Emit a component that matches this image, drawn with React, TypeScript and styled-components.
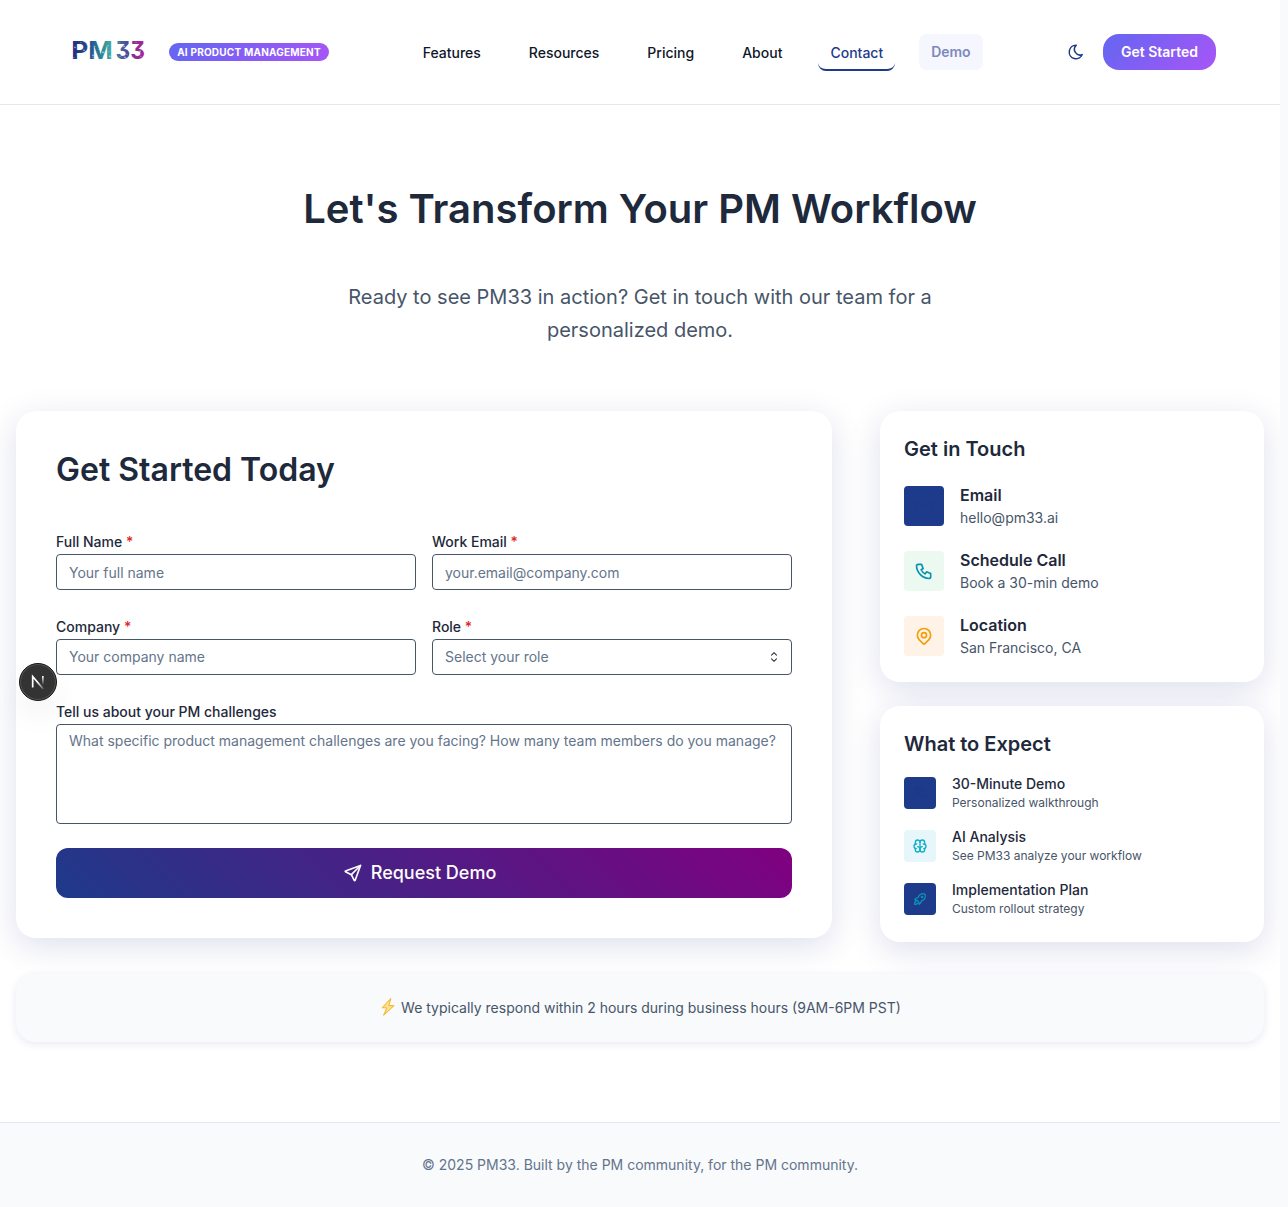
import React from "react";
import styled, { createGlobalStyle } from "styled-components";
import {
  TbBrain,
  TbMail,
  TbMapPin,
  TbMoon,
  TbPhone,
  TbRocket,
  TbSend,
  TbUsers,
} from "react-icons/tb";

const GlobalStyle = createGlobalStyle`
  *, *::before, *::after { box-sizing: border-box; }
  html, body { margin: 0; background: #f8fafc; }
  body {
    font-family: Inter, "Liberation Sans", sans-serif;
    color: #1e293b;
    overflow: hidden;
  }
  h1, h2, h3, p { margin: 0; }
`;

const Page = styled.div`
  width: 1280px;
  height: 1207px;
  display: flex;
  flex-direction: column;
  overflow: hidden;
  background: #fff;
`;

const Header = styled.header`
  height: 105px;
  flex: none;
  display: flex;
  align-items: center;
  padding: 0 64px 0 68px;
  border-bottom: 1px solid #e2e8f0;
`;

const Logo = styled.div`
  display: flex;
  width: 101px;
  height: 36px;
`;

const Wordmark = styled.g`
  font-family: Inter, sans-serif;
  font-size: 24.7px;
  font-weight: 700;
  font-feature-settings: "cv09" 1;
`;

const Badge = styled.span`
  width: 160px;
  height: 18px;
  border-radius: 9px;
  background: linear-gradient(135deg, #6366f1, #a855f7);
  color: #fff;
  font-size: 10px;
  font-weight: 700;
  line-height: 18px;
  letter-spacing: 0.22px;
  text-align: center;
  white-space: nowrap;
`;

const Nav = styled.nav`
  display: flex;
  gap: 24px;
  margin-left: 81.7px;
`;

const NavLink = styled.a<{ $active?: boolean }>`
  height: 36px;
  padding: 0 12px;
  margin-top: 1px;
  border-radius: 8px;
  border-bottom: 2px solid ${(p) => (p.$active ? "#1e3a8a" : "transparent")};
  color: ${(p) => (p.$active ? "#1e3a8a" : "#0f172a")};
  font-size: 14px;
  font-weight: 500;
  line-height: 36px;
`;

const DemoLink = styled.a`
  width: 64px;
  height: 36px;
  margin-left: -0.3px;
  border-radius: 8px;
  background: #f6f6fe;
  color: #7c8ab9;
  font-size: 14px;
  font-weight: 600;
  line-height: 36px;
  text-align: center;
`;

const Actions = styled.div`
  display: flex;
  align-items: center;
  gap: 18px;
  margin-left: auto;
  color: #1e3a8a;
`;

const StartButton = styled.button`
  width: 113px;
  height: 36px;
  padding: 0;
  border: 0;
  border-radius: 16px;
  background: linear-gradient(135deg, #6366f1, #a855f7);
  color: #fff;
  font: 600 14px/36px Inter, sans-serif;
`;

const Hero = styled.section`
  display: flex;
  flex-direction: column;
  align-items: center;
  padding-top: 80px;
  height: 306px;
  flex: none;
  text-align: center;
`;

const HeroTitle = styled.h1`
  font-size: 40px;
  font-weight: 600;
  line-height: 48px;
  color: #1e293b;
`;

const HeroText = styled.p`
  width: 600px;
  margin-top: 48px;
  font-size: 20px;
  line-height: 33px;
  color: #475569;
`;

const Columns = styled.main`
  display: grid;
  grid-template-columns: 816px 384px;
  gap: 48px;
  align-items: start;
  padding: 0 16px;
`;

const Card = styled.section<{ $pad: string }>`
  padding: ${(p) => p.$pad};
  border-radius: 20px;
  background: #fff;
  box-shadow: 0 8px 32px rgba(31, 38, 135, 0.15);
`;

const FormTitle = styled.h2`
  font-size: 32px;
  font-weight: 600;
  line-height: 38px;
`;

const Form = styled.form`
  display: grid;
  grid-template-columns: 1fr 1fr;
  gap: 26px 16px;
  margin-top: 42px;
`;

const Field = styled.label<{ $wide?: boolean }>`
  display: block;
  grid-column: ${(p) => (p.$wide ? "1 / -1" : "auto")};
`;

const Label = styled.span`
  display: block;
  height: 23px;
  font-size: 14px;
  font-weight: 500;
  line-height: 21px;
`;

const Required = styled.span`
  color: #e02424;
`;

const control = `
  display: block;
  width: 100%;
  border: 1px solid #475569;
  border-radius: 4px;
  background: #fff;
  font-family: Inter, sans-serif;
  font-size: 14px;
`;

const Input = styled.input<{ $raised?: boolean }>`
  ${control}
  height: 36px;
  padding: 0 12px ${(p) => (p.$raised ? 2 : 0)}px;
  &::placeholder { color: #64748b; opacity: 1; }
`;

const Select = styled.div`
  ${control}
  display: flex;
  align-items: center;
  justify-content: space-between;
  height: 36px;
  padding: 0 9px 0 12px;
  color: #64748b;
`;

const SelectText = styled.span`
  height: 34px;
  line-height: 33px;
`;

const TextArea = styled.textarea`
  ${control}
  height: 100px;
  padding: 5px 12px;
  line-height: 22px;
  resize: none;
  overflow: hidden;
  &::placeholder { color: #64748b; opacity: 1; }
`;

const Submit = styled.button`
  grid-column: 1 / -1;
  display: flex;
  align-items: center;
  justify-content: center;
  gap: 8px;
  height: 50px;
  margin-top: -2px;
  padding: 0 9px 0 0;
  border: 0;
  border-radius: 12px;
  background: linear-gradient(45deg, #1e3a8a, #800080);
  color: #fff;
  font: 500 18px/50px Inter, sans-serif;
`;

const Side = styled.aside`
  display: flex;
  flex-direction: column;
  gap: 24px;
`;

const SideTitle = styled.h3`
  font-size: 20px;
  font-weight: 600;
  line-height: 28px;
`;

const List = styled.div<{ $top: number; $gap: number }>`
  display: flex;
  flex-direction: column;
  gap: ${(p) => p.$gap}px;
  margin-top: ${(p) => p.$top}px;
`;

const Item = styled.div`
  display: flex;
  gap: 16px;
`;

const IconBox = styled.div<{ $size: number; $bg: string; $fg: string }>`
  display: flex;
  align-items: center;
  justify-content: center;
  width: ${(p) => p.$size}px;
  height: ${(p) => p.$size}px;
  margin-top: ${(p) => (p.$size === 40 ? 2 : 3)}px;
  border-radius: 4px;
  background: ${(p) => p.$bg};
  color: ${(p) => p.$fg};
`;

const ItemTitle = styled.p<{ $small?: boolean }>`
  font-size: ${(p) => (p.$small ? 14 : 16)}px;
  font-weight: ${(p) => (p.$small ? 500 : 600)};
  line-height: ${(p) => (p.$small ? 20 : 23)}px;
`;

const ItemText = styled.p<{ $small?: boolean }>`
  font-size: ${(p) => (p.$small ? 12 : 14)}px;
  line-height: ${(p) => (p.$small ? 18 : 22)}px;
  color: #475569;
`;

const Notice = styled.section`
  display: flex;
  align-items: center;
  justify-content: center;
  gap: 6px;
  height: 68px;
  flex: none;
  margin: 32px 16px 0;
  padding: 0 0 2px 2px;
  border-radius: 20px;
  background: #f8fafc;
  box-shadow: 0 2px 8px rgba(31, 38, 135, 0.1);
  color: #475569;
  font-size: 14px;
`;

const Footer = styled.footer`
  height: 85px;
  margin-top: 80px;
  border-top: 1px solid #e2e8f0;
  background: #f8fafc;
  color: #64748b;
  font-size: 14px;
  line-height: 84px;
  text-align: center;
`;

const DevBadge = styled.div`
  position: fixed;
  left: 19px;
  top: 663px;
  display: flex;
  align-items: center;
  justify-content: center;
  width: 38px;
  height: 38px;
  border: 1px solid #161616;
  border-radius: 50%;
  background: #333;
  box-shadow: inset 0 0 0 1px #555, 0 16px 32px -8px rgba(0, 0, 0, 0.14);
`;

const speckles = [
  [3, 10], [5, 17], [9, 5], [12, 13], [15, 7], [18, 9], [21, 18], [23, 9],
  [27, 12], [31, 15], [36, 8], [37, 14], [38, 19], [21, 20], [47, 5], [52, 9],
  [48, 19], [55, 17], [53, 20], [61, 20], [64, 5], [68, 14], [69, 19], [2, 20],
];

function LogoMark() {
  return (
    <svg width="84" height="36" viewBox="-4 -4 84 36">
      <defs>
        <linearGradient id="logo-fill" gradientUnits="userSpaceOnUse" x1="0" y1="0" x2="73" y2="0">
          <stop offset="0" stopColor="#232a80" />
          <stop offset="0.24" stopColor="#24508f" />
          <stop offset="0.4" stopColor="#2c8798" />
          <stop offset="0.54" stopColor="#45aaa0" />
          <stop offset="0.6" stopColor="#397f9e" />
          <stop offset="0.75" stopColor="#4c4b9c" />
          <stop offset="0.86" stopColor="#8b2f94" />
          <stop offset="1" stopColor="#ac2396" />
        </linearGradient>
      </defs>
      <Wordmark fill="url(#logo-fill)">
        <text x="-0.8" y="20.6" textLength="41.5" lengthAdjust="spacingAndGlyphs">PM</text>
        <text x="43.5" y="20.6" textLength="29.5" lengthAdjust="spacingAndGlyphs">33</text>
      </Wordmark>
      {speckles.map(([x, y], i) => (
        <circle key={i} cx={x} cy={y - 0.6} r={i % 3 === 0 ? 0.8 : 0.5} fill="#fff" opacity="0.6" />
      ))}
    </svg>
  );
}

function CaretSort() {
  return (
    <svg width="16" height="16" viewBox="0 0 15 15" fill="none" stroke="#1e293b" strokeWidth="0.95" strokeLinecap="round" strokeLinejoin="round">
      <path d="M5.2 5.75 7.5 3.5l2.3 2.25M5.2 9.25l2.3 2.25 2.3-2.25" />
    </svg>
  );
}

function Bolt() {
  return (
    <svg width="14" height="20" viewBox="0 0 14 20">
      <path d="M9.8 1.5 1.3 10.8h4.6L2.6 18.2 12.9 8.6H7.8z" fill="#fde58f" stroke="#f8b93c" strokeWidth="1.1" strokeLinejoin="round" />
    </svg>
  );
}

function NextMark() {
  return (
    <svg width="14" height="16" viewBox="0 0 14 16" fill="none" strokeWidth="1.7">
      <defs>
        <linearGradient id="n-stem" x1="0" y1="2" x2="0" y2="11" gradientUnits="userSpaceOnUse">
          <stop stopColor="#fff" />
          <stop offset="1" stopColor="#fff" stopOpacity="0" />
        </linearGradient>
        <linearGradient id="n-diag" x1="7" y1="8" x2="13" y2="15" gradientUnits="userSpaceOnUse">
          <stop stopColor="#fff" />
          <stop offset="1" stopColor="#fff" stopOpacity="0.15" />
        </linearGradient>
      </defs>
      <path d="M1.7 13.5V2.5L12.3 15" stroke="url(#n-diag)" />
      <path d="M11 2h1.7v9H11z" fill="url(#n-stem)" />
    </svg>
  );
}

const contacts = [
  { title: "Email", text: "hello@pm33.ai", icon: <TbMail size={20} />, bg: "#1e3a8a", fg: "#1e3a8a" },
  { title: "Schedule Call", text: "Book a 30-min demo", icon: <TbPhone size={20} />, bg: "#ebf9f0", fg: "#0891b2" },
  { title: "Location", text: "San Francisco, CA", icon: <TbMapPin size={20} />, bg: "#fff2e6", fg: "#f59e0b" },
];

const expectations = [
  { title: "30-Minute Demo", text: "Personalized walkthrough", icon: <TbUsers size={16} />, bg: "#1e3a8a", fg: "#1d3888" },
  { title: "AI Analysis", text: "See PM33 analyze your workflow", icon: <TbBrain size={16} />, bg: "#e6f6fa", fg: "#12aec4" },
  { title: "Implementation Plan", text: "Custom rollout strategy", icon: <TbRocket size={16} />, bg: "#1e3a8a", fg: "#0891b2" },
];

export default function App() {
  return (
    <>
      <GlobalStyle />
      <Page>
        <Header>
          <Logo>
            <LogoMark />
          </Logo>
          <Badge>AI PRODUCT MANAGEMENT</Badge>
          <Nav>
            <NavLink>Features</NavLink>
            <NavLink>Resources</NavLink>
            <NavLink>Pricing</NavLink>
            <NavLink>About</NavLink>
            <NavLink $active>Contact</NavLink>
            <DemoLink>Demo</DemoLink>
          </Nav>
          <Actions>
            <TbMoon size={18} />
            <StartButton>Get Started</StartButton>
          </Actions>
        </Header>

        <Hero>
          <HeroTitle>Let's Transform Your PM Workflow</HeroTitle>
          <HeroText>Ready to see PM33 in action? Get in touch with our team for a personalized demo.</HeroText>
        </Hero>

        <Columns>
          <Card $pad="40px">
            <FormTitle>Get Started Today</FormTitle>
            <Form>
              <Field>
                <Label>Full Name <Required>*</Required></Label>
                <Input placeholder="Your full name" />
              </Field>
              <Field>
                <Label>Work Email <Required>*</Required></Label>
                <Input placeholder="your.email@company.com" />
              </Field>
              <Field>
                <Label>Company <Required>*</Required></Label>
                <Input $raised placeholder="Your company name" />
              </Field>
              <Field>
                <Label>Role <Required>*</Required></Label>
                <Select>
                  <SelectText>Select your role</SelectText>
                  <CaretSort />
                </Select>
              </Field>
              <Field $wide>
                <Label>Tell us about your PM challenges</Label>
                <TextArea placeholder="What specific product management challenges are you facing? How many team members do you manage?" />
              </Field>
              <Submit type="button">
                <TbSend size={20} />
                <span>Request Demo</span>
              </Submit>
            </Form>
          </Card>

          <Side>
            <Card $pad="24px 24px 23px">
              <SideTitle>Get in Touch</SideTitle>
              <List $top={21} $gap={20}>
                {contacts.map((c) => (
                  <Item key={c.title}>
                    <IconBox $size={40} $bg={c.bg} $fg={c.fg}>{c.icon}</IconBox>
                    <div>
                      <ItemTitle>{c.title}</ItemTitle>
                      <ItemText>{c.text}</ItemText>
                    </div>
                  </Item>
                ))}
              </List>
            </Card>
            <Card $pad="24px">
              <SideTitle>What to Expect</SideTitle>
              <List $top={16} $gap={15}>
                {expectations.map((e) => (
                  <Item key={e.title}>
                    <IconBox $size={32} $bg={e.bg} $fg={e.fg}>{e.icon}</IconBox>
                    <div>
                      <ItemTitle $small>{e.title}</ItemTitle>
                      <ItemText $small>{e.text}</ItemText>
                    </div>
                  </Item>
                ))}
              </List>
            </Card>
          </Side>
        </Columns>

        <Notice>
          <Bolt />
          <span>We typically respond within 2 hours during business hours (9AM-6PM PST)</span>
        </Notice>

        <Footer>© 2025 PM33. Built by the PM community, for the PM community.</Footer>
      </Page>
      <DevBadge>
        <NextMark />
      </DevBadge>
    </>
  );
}
